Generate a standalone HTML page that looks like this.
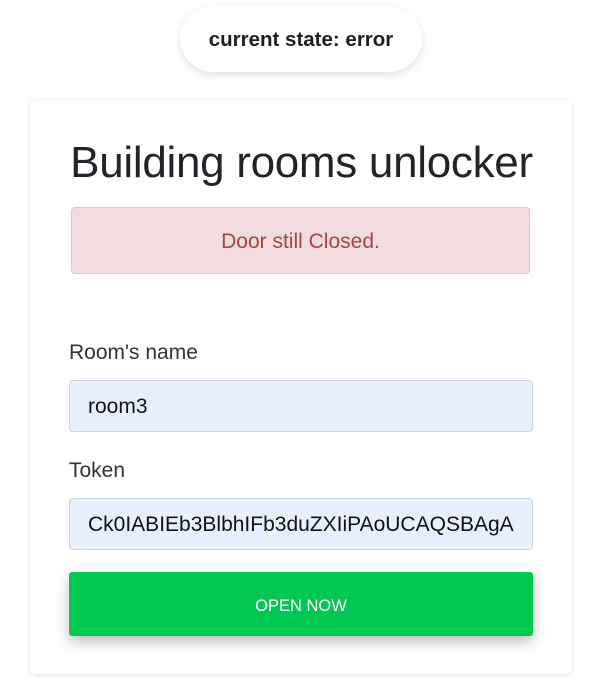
<!DOCTYPE html>
<html><head><meta charset="utf-8"><style>
*{box-sizing:border-box;margin:0;padding:0}
body{width:600px;height:696px;background:#fff;font-family:"Liberation Sans",sans-serif;position:relative;overflow:hidden;color:#212529}
.pill{position:absolute;left:180px;top:6px;width:242px;height:66px;border-radius:33px;background:#fff;box-shadow:0 3px 8px rgba(0,0,0,.12);font-weight:bold;font-size:20.5px;text-align:center;line-height:68px;color:#1e1e1e}
.card{position:absolute;left:30px;top:100px;width:542px;height:574px;background:#fff;border-radius:6px;box-shadow:0 1px 4px rgba(0,0,0,.12)}
.t{position:absolute;left:0;width:603px;top:138px;text-align:center;font-size:44px;font-weight:300;color:#212529;letter-spacing:-0.3px}
.alert{position:absolute;left:71px;top:207px;width:459px;height:67px;background:#f2dcdf;border:1px solid #e8c4c8;border-radius:4px;color:#a94442;font-size:21px;text-align:center;line-height:67px}
.lab{position:absolute;left:69px;font-size:21px;color:#333}
.inp{position:absolute;left:69px;width:464px;height:52px;background:#e8f0fd;border:1px solid #cdd5e0;border-radius:4px;padding-left:18px;font-size:21px;line-height:52px;color:#111;white-space:nowrap;overflow:hidden}
.btn{position:absolute;left:69px;top:572px;width:464px;height:64px;background:#00c851;border-radius:3px;box-shadow:0 6px 14px rgba(0,0,0,.25);color:#fff;font-size:16.5px;text-align:center;line-height:68px}
</style></head><body>
<div class="pill">current state: error</div>
<div class="card"></div>
<div class="t">Building rooms unlocker</div>
<div class="alert">Door still Closed.</div>
<div class="lab" style="top:341px">Room's name</div>
<div class="inp" style="top:380px">room3</div>
<div class="lab" style="top:459px">Token</div>
<div class="inp" style="top:498px">Ck0IABIEb3BlbhIFb3duZXIiPAoUCAQSBAgA</div>
<div class="btn">OPEN NOW</div>
</body></html>
